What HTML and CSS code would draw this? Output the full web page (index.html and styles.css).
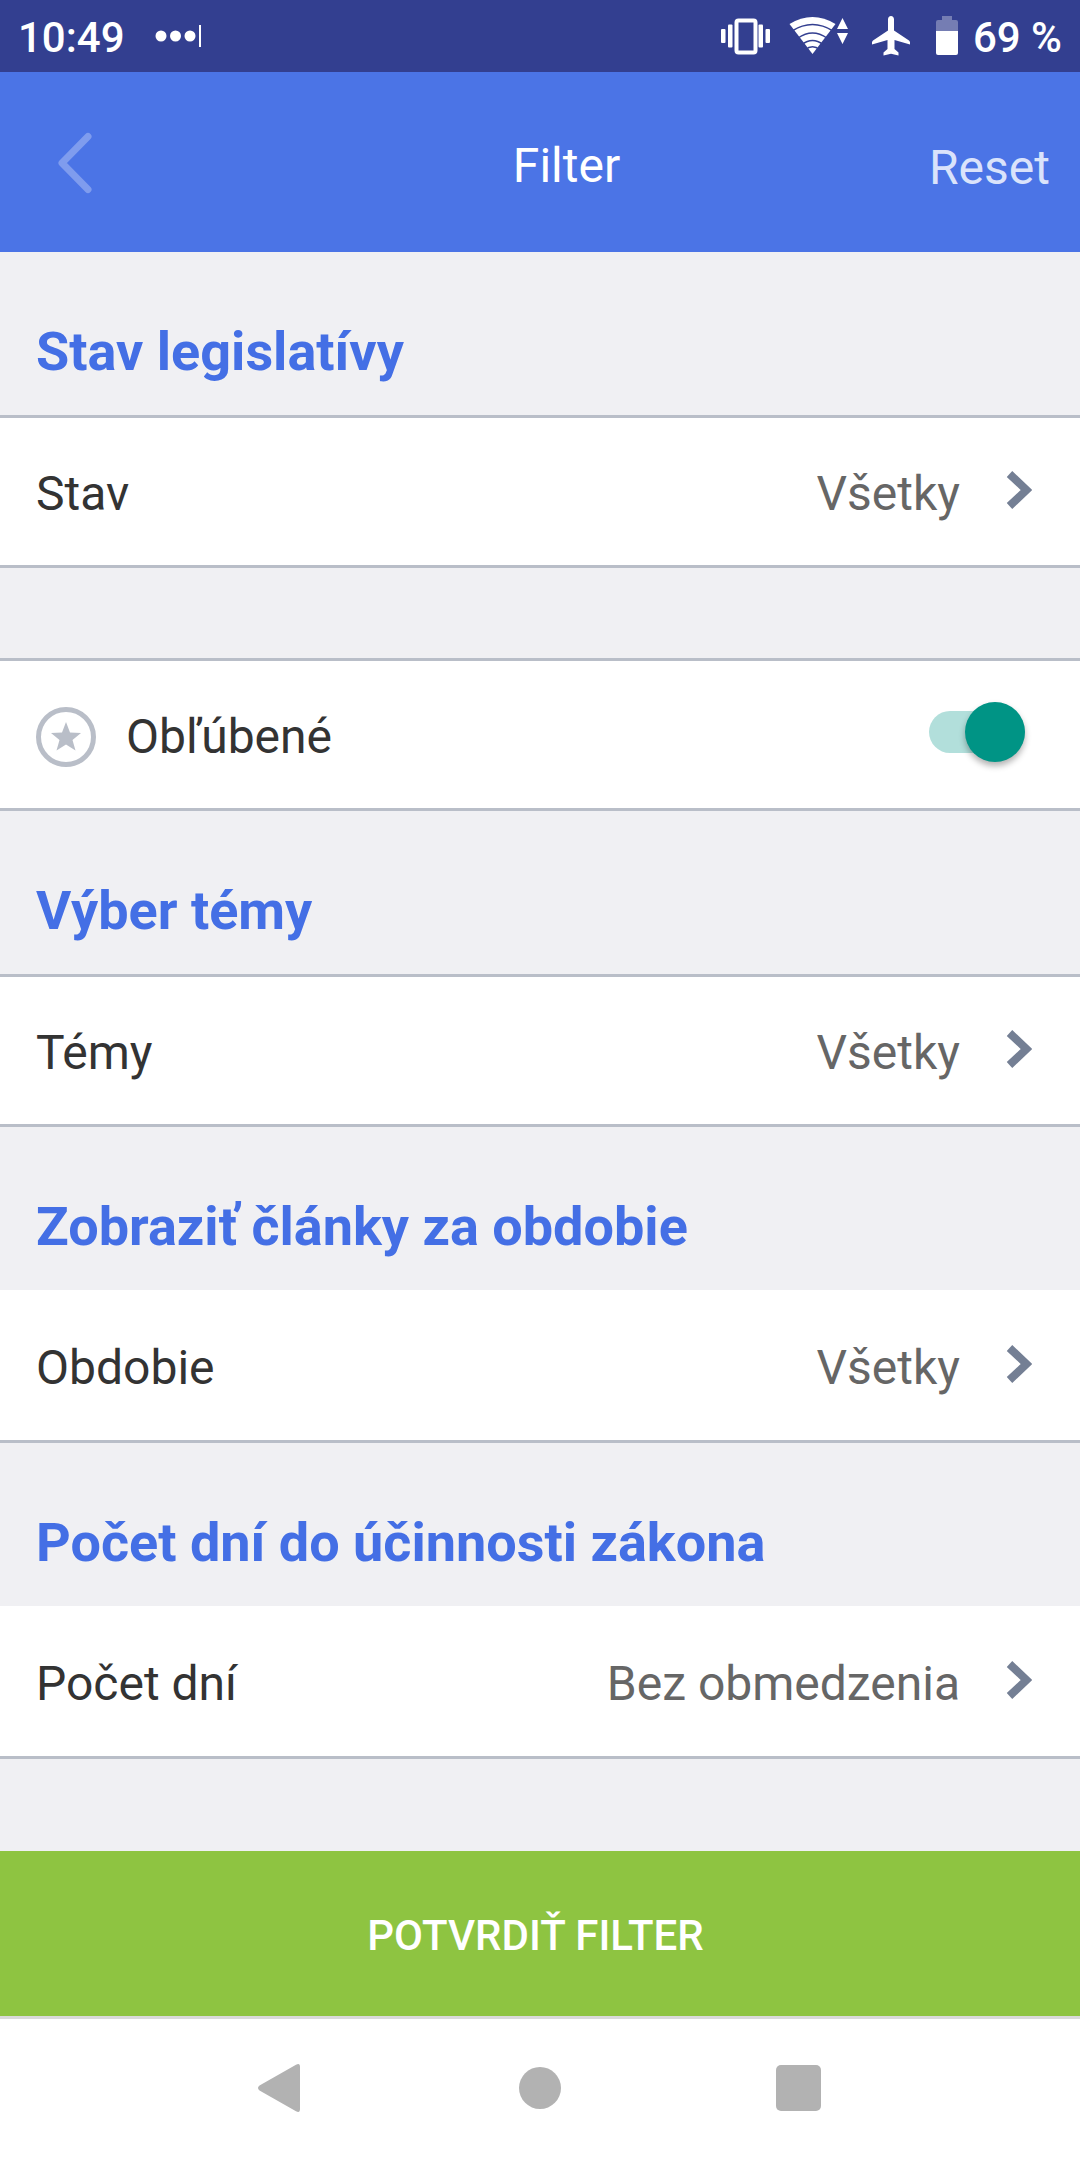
FILE: index.html
```html
<!DOCTYPE html>
<html lang="sk">
<head>
<meta charset="utf-8">
<meta name="viewport" content="width=device-width, initial-scale=1">
<title>Filter</title>
<link rel="stylesheet" href="styles.css">
</head>
<body>
<div class="screen">
  <div class="status">
    <span class="status-time">10:49</span>
    <svg class="status-more" width="44" height="24" viewBox="0 0 44 24" aria-hidden="true">
      <g fill="#fff"><circle cx="7" cy="12" r="5.500"/><circle cx="21.500" cy="12" r="5.500"/><circle cx="36" cy="12" r="5.500"/><rect x="45" y="1" width="2" height="22"/></g>
    </svg>
    <div class="status-icons">
      <svg width="50" height="40" viewBox="0 0 50 40" fill="#fff" aria-hidden="true">
        <rect x="1" y="13" width="4.500" height="14" rx="1"/>
        <rect x="8" y="8.500" width="4.500" height="23" rx="1"/>
        <rect x="16.500" y="4.500" width="19" height="32" rx="2" fill="none" stroke="#fff" stroke-width="4"/>
        <rect x="38.500" y="8.500" width="4.500" height="23" rx="1"/>
        <rect x="45.500" y="13" width="4.500" height="14" rx="1"/>
      </svg>
      <svg width="60" height="40" viewBox="0 0 60 40" aria-hidden="true">
        <path d="M0.500 8Q23.500-6 46.500 8L23.500 38Z" fill="#fff"/>
        <g fill="none" stroke="#333f90" stroke-width="1.500"><path d="M3 15Q23.500 2 44 15M9 22Q23.500 12 38 22M13 28.500Q23.500 20.500 34 28.500M16 34Q23.500 27.500 31 34"/></g>
        <path d="M53.500 2L59 13H48ZM48 17H59L53.500 28Z" fill="#fff"/>
      </svg>
      <svg width="46" height="44" viewBox="0 0 46 44" aria-hidden="true">
        <path d="M23 2C24.800 2 26 3.500 26 5.500V16.500L41 26.500Q42 27.300 42 28.500V30.500L26.500 26V35L30.500 38.500V41.500L23 39.800L15.500 41.500V38.500L19.500 35V26L4 30.500V28.500Q4 27.300 5 26.500L20 16.500V5.500C20 3.500 21.200 2 23 2Z" fill="#fff"/>
      </svg>
      <div class="battery">
        <svg width="28" height="42" viewBox="0 0 28 42" aria-hidden="true">
          <path d="M9 1H19V5H23Q25 5 25 7V17H3V7Q3 5 5 5H9Z" fill="#757db3"/>
          <path d="M3 16H25V38Q25 40 23 40H5Q3 40 3 38Z" fill="#fff"/>
        </svg>
        <span>69 %</span>
      </div>
    </div>
  </div>

  <header class="bar">
    <button class="bar-back" type="button" aria-label="Späť">
      <svg width="36" height="62" viewBox="0 0 36 62" aria-hidden="true"><path d="M31 4.500L5 31L31 57.500" fill="none" stroke="#7f9cee" stroke-width="7" stroke-linecap="round" stroke-linejoin="round"/></svg>
    </button>
    <h1 class="bar-title">Filter</h1>
    <button class="bar-reset" type="button">Reset</button>
  </header>

  <main class="filters">
    <h2 class="heading">Stav legislatívy</h2>
    <button class="row row-ruled" type="button">
      <span class="row-label">Stav</span>
      <span class="row-value">Všetky</span>
      <svg class="chevron" width="26" height="40" viewBox="0 0 26 40" aria-hidden="true"><path d="M3.500 4L20.500 20L3.500 36" /></svg>
    </button>

    <div class="row row-ruled row-spaced">
      <svg class="row-icon" width="60" height="60" viewBox="0 0 60 60" aria-hidden="true">
        <circle cx="30" cy="30" r="27.500" fill="none" stroke="#b9bec8" stroke-width="5"/>
        <path d="M30 15L34 25.500L45 26L36.500 33L39.500 43.500L30 37.500L20.500 43.500L23.500 33L15 26L26 25.500Z" fill="#b9bec8"/>
      </svg>
      <label class="row-label" for="favourites">Obľúbené</label>
      <input class="switch" id="favourites" type="checkbox" role="switch" checked>
    </div>

    <h2 class="heading">Výber témy</h2>
    <button class="row row-ruled" type="button">
      <span class="row-label">Témy</span>
      <span class="row-value">Všetky</span>
      <svg class="chevron" width="26" height="40" viewBox="0 0 26 40" aria-hidden="true"><path d="M3.500 4L20.500 20L3.500 36" /></svg>
    </button>

    <h2 class="heading">Zobraziť články za obdobie</h2>
    <button class="row" type="button">
      <span class="row-label">Obdobie</span>
      <span class="row-value">Všetky</span>
      <svg class="chevron" width="26" height="40" viewBox="0 0 26 40" aria-hidden="true"><path d="M3.500 4L20.500 20L3.500 36" /></svg>
    </button>

    <h2 class="heading">Počet dní do účinnosti zákona</h2>
    <button class="row" type="button">
      <span class="row-label">Počet dní</span>
      <span class="row-value">Bez obmedzenia</span>
      <svg class="chevron" width="26" height="40" viewBox="0 0 26 40" aria-hidden="true"><path d="M3.500 4L20.500 20L3.500 36" /></svg>
    </button>
  </main>

  <button class="confirm" type="button">POTVRDIŤ FILTER</button>

  <nav class="system-nav" aria-label="Systém">
    <button type="button" aria-label="Naspäť"><svg width="48" height="48" viewBox="0 0 48 48" aria-hidden="true"><path d="M40 0.800Q44-1.500 44 3V45Q44 49.500 40 47.200L3.500 26.500Q0.500 24 3.500 21.500Z"/></svg></button>
    <button type="button" aria-label="Domov"><svg width="48" height="48" viewBox="0 0 48 48" aria-hidden="true"><circle cx="24" cy="24" r="21"/></svg></button>
    <button type="button" aria-label="Prehľad"><svg width="48" height="48" viewBox="0 0 48 48" aria-hidden="true"><rect x="0" y="1" width="45" height="46" rx="5"/></svg></button>
  </nav>
</div>
</body>
</html>
```

FILE: styles.css
```css
* {
  box-sizing: border-box;
}

body {
  margin: 0;
  background: #f0f0f3;
  color: #333;
  font-family: Roboto, "Noto Sans", sans-serif;
  font-size: 48px;
  line-height: 60px;
}

button {
  margin: 0;
  padding: 0;
  border: 0;
  background: none;
  color: inherit;
  font: inherit;
  cursor: pointer;
}

svg {
  display: block;
  flex: none;
}

.screen {
  display: flex;
  flex-direction: column;
  min-height: 100vh;
}

/* Status bar */
.status {
  display: flex;
  align-items: center;
  height: 72px;
  padding: 0 18px;
  background: #333f90;
  color: #fff;
  font-size: 42px;
  font-weight: 500;
  line-height: 48px;
}

.status-time,
.battery span {
  padding-top: 3px;
}

.status-more {
  margin-left: 29px;
  overflow: visible;
}

.status-icons {
  display: flex;
  align-items: center;
  gap: 19px;
  margin-left: auto;
}

.battery {
  display: flex;
  align-items: center;
  gap: 12px;
}

/* Title bar */
.bar {
  display: flex;
  align-items: center;
  height: 180px;
  padding-right: 30px;
  background: #4b74e6;
  color: #fff;
}

.bar-back {
  width: 204px;
  padding: 31px 0 29px 57px;
}

.bar-title {
  flex: 1;
  margin: 0;
  padding-top: 8px;
  font-size: 48px;
  font-weight: 400;
  text-align: center;
}

.bar-reset {
  padding-top: 12px;
  color: #dae3fb;
}

/* Filter list */
.filters {
  flex: 1;
  padding-bottom: 90px;
}

.heading {
  margin: 0;
  padding: 68px 36px 31px;
  color: #446fe5;
  font-size: 54px;
  font-weight: 700;
  line-height: 64px;
}

.row {
  display: flex;
  align-items: center;
  width: 100%;
  min-height: 153px;
  padding: 5px 48px 0 36px;
  border-bottom: 3px solid #b9bec8;
  background: #fff;
  text-align: left;
}

.row-ruled {
  padding-top: 4px;
  border-top: 3px solid #b9bec8;
}

.row-spaced {
  margin-top: 90px;
  padding-right: 55px;
}

.row-icon {
  margin-right: 30px;
}

.row-label {
  flex: 1;
}

.row-value {
  color: #666;
}

.chevron {
  margin-bottom: 8px;
  margin-left: 46px;
  fill: none;
  stroke: #747f94;
  stroke-width: 8px;
}

.switch {
  display: flex;
  align-items: center;
  justify-content: flex-end;
  width: 96px;
  height: 42px;
  margin: 0 0 10px;
  border-radius: 21px;
  background: #b2dfdb;
  appearance: none;
  cursor: pointer;
}

.switch::before {
  content: "";
  width: 60px;
  height: 60px;
  flex: none;
  border-radius: 50%;
  background: #009485;
  box-shadow: 0 4px 6px rgba(0, 0, 0, 0.3);
}

.switch:not(:checked) {
  justify-content: flex-start;
  background: #b9bec8;
}

.switch:not(:checked)::before {
  background: #f0f0f3;
}

/* Footer */
.confirm {
  width: 100%;
  height: 165px;
  padding: 4px 9px 0 0;
  background: #8ec441;
  color: #fff;
  font-size: 42px;
  font-weight: 500;
}

.system-nav {
  display: flex;
  justify-content: center;
  gap: 110px;
  padding: 45px 0 48px;
  border-top: 3px solid #dadada;
  background: #fff;
}

.system-nav button {
  display: flex;
  justify-content: center;
  width: 150px;
  fill: #b2b2b2;
}
```
